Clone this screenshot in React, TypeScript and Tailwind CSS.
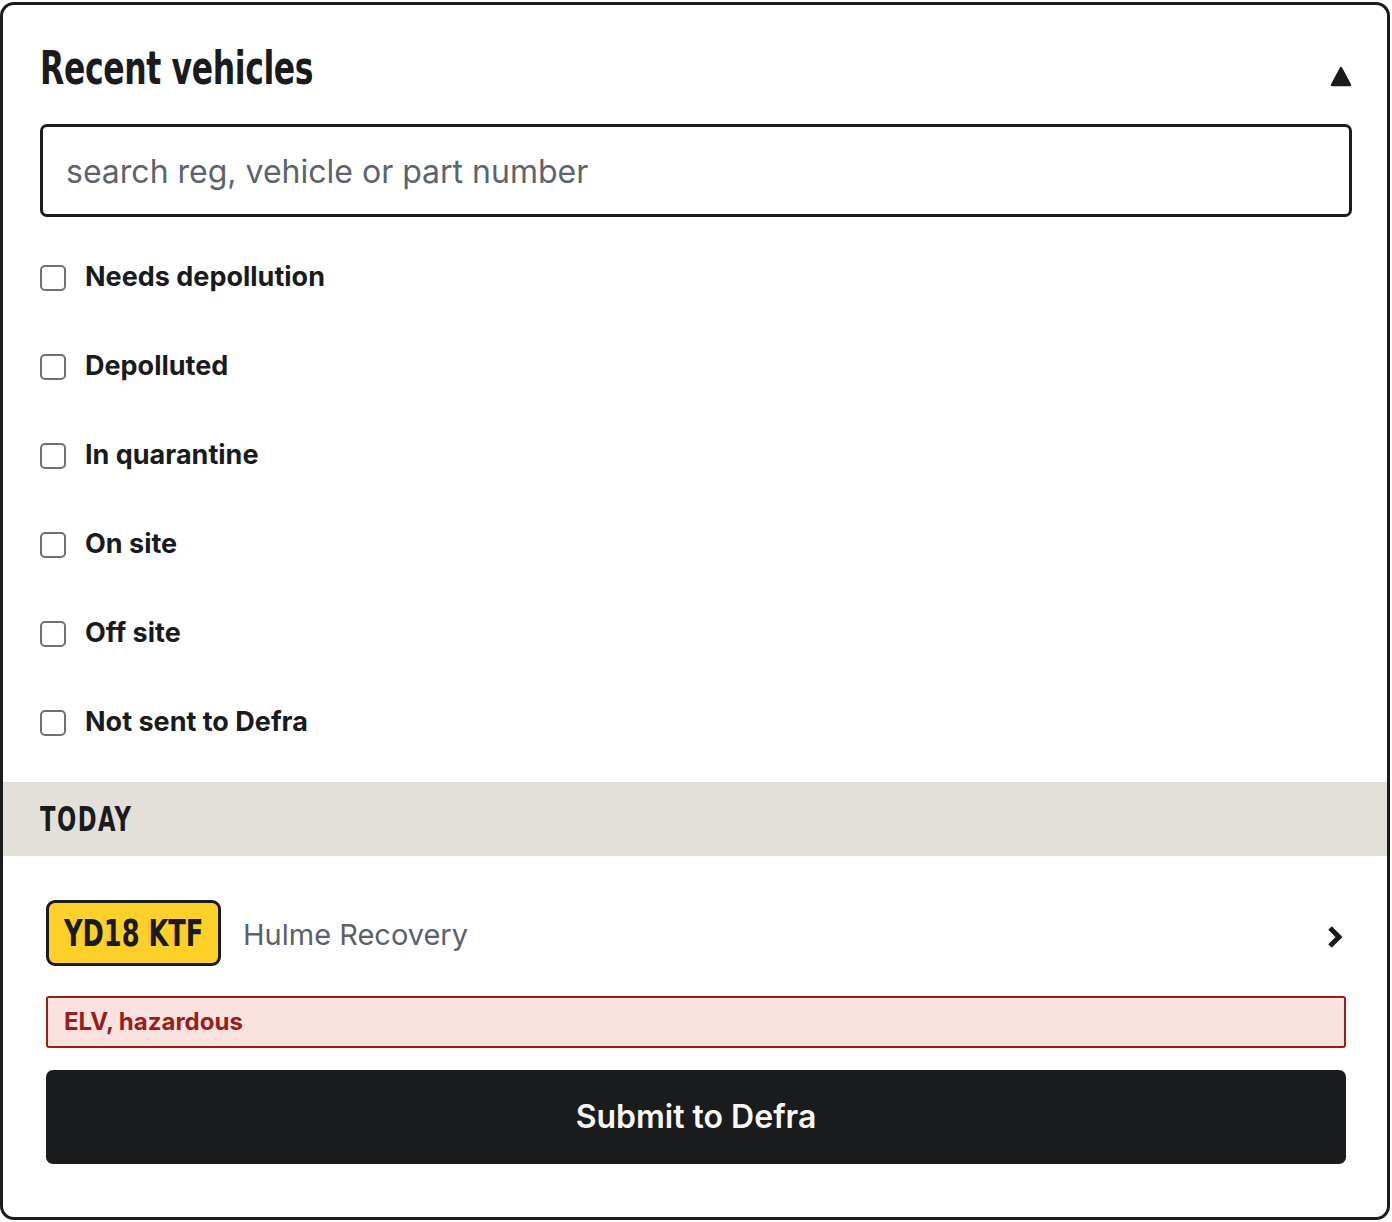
const condensed = "font-['DejaVu_Sans_Condensed','DejaVu_Sans',sans-serif]";

const filters = [
  "Needs depollution",
  "Depolluted",
  "In quarantine",
  "On site",
  "Off site",
  "Not sent to Defra",
];

function CollapseIcon() {
  return (
    <svg width="22" height="22" viewBox="0 0 22 22" className="mb-[12px]">
      <path d="M11 2 L20 19 L2 19 Z" fill="#1a1b1d" stroke="#1a1b1d" strokeWidth="2.5" strokeLinejoin="round" />
    </svg>
  );
}

function ChevronIcon() {
  return (
    <svg width="16" height="24" viewBox="0 0 16 24">
      <path d="M3 3 L12 12 L3 21" fill="none" stroke="#1a1b1d" strokeWidth="5" />
    </svg>
  );
}

function FilterRow({ label }: { label: string }) {
  return (
    <label className="flex h-[89px] items-center gap-[19px]">
      <span className="size-[26px] shrink-0 rounded-[5px] border-2 border-[#707070] bg-white" />
      <span className="text-[27px] font-bold text-[#1a1b1d]">{label}</span>
    </label>
  );
}

export default function App() {
  return (
    <div className="h-[1222px] w-full bg-white pt-[2px] font-['Inter',sans-serif]">
      <div className="flex h-[1218px] w-[1390px] flex-col overflow-hidden rounded-[14px] border-[3px] border-[#1a1b1d] bg-white">
        <div className="pl-[37px] pr-[35px] pt-[31px]">
          <div className="flex h-[64px] items-end justify-between">
            <h2 className={`${condensed} origin-left scale-x-[0.745] whitespace-nowrap text-[47px] font-bold leading-[64px] tracking-[-0.5px] text-[#1a1b1d]`}>
              Recent vehicles
            </h2>
            <CollapseIcon />
          </div>
          <div className="mt-[24px] flex h-[93px] items-center rounded-[7px] border-[3px] border-[#1a1b1d] px-[23px]">
            <span className="mt-[2px] text-[32px] text-[#5c636b]">search reg, vehicle or part number</span>
          </div>
          <div className="mt-[16px] flex flex-col pb-[15px]">
            {filters.map((f) => (
              <FilterRow key={f} label={f} />
            ))}
          </div>
        </div>

        <div className="flex h-[74px] items-center bg-[#e3e0d9] pl-[37px]">
          <span className={`${condensed} origin-left scale-x-[0.74] text-[34px] font-bold tracking-[2px] text-[#1a1b1d]`}>TODAY</span>
        </div>

        <div className="flex flex-col pl-[43px] pr-[41px] pt-[44px]">
          <div className="flex items-center">
            <div className="flex h-[66px] w-[175px] shrink-0 items-center overflow-hidden rounded-[9px] border-[3px] border-[#1a1b1d] bg-[#fed02a] pl-[15px]">
              <span className={`${condensed} origin-left scale-x-[0.75] whitespace-nowrap text-[38px] font-bold text-[#1a1b1d]`}>YD18 KTF</span>
            </div>
            <span className="ml-[22px] mt-[3px] text-[29px] text-[#5a6169]">Hulme Recovery</span>
            <span className="ml-auto mr-[3px] mt-[8px]">
              <ChevronIcon />
            </span>
          </div>
          <div className="mt-[30px] flex h-[52px] items-center rounded-[3px] border-2 border-[#9b1c1c] bg-[#fae3df] px-[16px]">
            <span className="text-[24px] font-bold text-[#9b1c1c]">ELV, hazardous</span>
          </div>
          <button className="mt-[22px] flex h-[94px] items-center justify-center rounded-[7px] bg-[#1a1b1d]">
            <span className="text-[32px] font-semibold text-[#f8f7f3]">Submit to Defra</span>
          </button>
        </div>
      </div>
    </div>
  );
}
